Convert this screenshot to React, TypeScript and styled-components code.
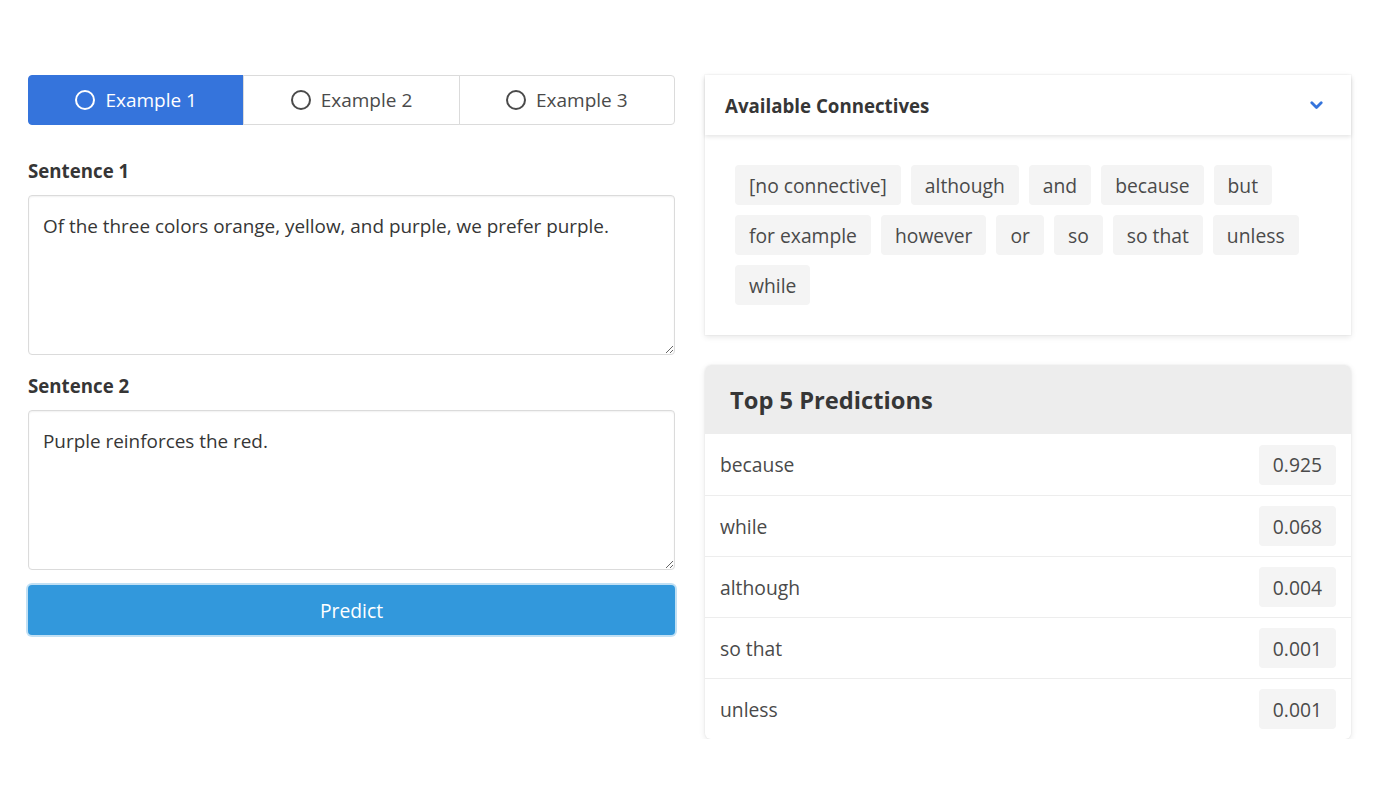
import React, { useState } from 'react'
import styled, { createGlobalStyle } from 'styled-components'

const $text = '#363636'
const $body = '#4a4a4a'
const $blue = '#3574dc'
const $predict = '#3298dc'
const $chip = '#f4f4f4'
const $border = '#dbdbdb'

const GlobalStyle = createGlobalStyle`
  html, body {
    margin: 0;
    padding: 0;
    background: #fff;
  }
  body {
    font-family: 'Open Sans', 'Noto Sans', sans-serif;
    color: ${$text};
  }
  * {
    box-sizing: border-box;
  }
`

const examples = [
  {
    s1: 'Of the three colors orange, yellow, and purple, we prefer purple.',
    s2: 'Purple reinforces the red.',
  },
  { s1: '', s2: '' },
  { s1: '', s2: '' },
]

const connectives = [
  '[no connective]',
  'although',
  'and',
  'because',
  'but',
  'for example',
  'however',
  'or',
  'so',
  'so that',
  'unless',
  'while',
]

const predictions = [
  { label: 'because', score: '0.925' },
  { label: 'while', score: '0.068' },
  { label: 'although', score: '0.004' },
  { label: 'so that', score: '0.001' },
  { label: 'unless', score: '0.001' },
]

export default function App() {
  const [active, setActive] = useState(0)
  const [open, setOpen] = useState(true)

  return (
    <>
      <GlobalStyle />
      <Page>
        <Column>
          <Tabs>
            {examples.map((_, i) => (
              <Tab key={i} active={active === i} onClick={() => setActive(i)}>
                <Radio active={active === i} />
                Example {i + 1}
              </Tab>
            ))}
          </Tabs>
          <Field>
            <Label>Sentence 1</Label>
            <TextArea defaultValue={examples[0].s1} key={`a${active}`} />
          </Field>
          <Field>
            <Label>Sentence 2</Label>
            <TextArea defaultValue={examples[0].s2} key={`b${active}`} />
          </Field>
          <PredictButton>Predict</PredictButton>
        </Column>

        <Column>
          <Card>
            <CardHeader onClick={() => setOpen(!open)}>
              <CardTitle>Available Connectives</CardTitle>
              <svg width="13" height="9" viewBox="0 0 13 9">
                <path
                  d="M1.8 1.8 L6.5 6.5 L11.2 1.8"
                  fill="none"
                  stroke={$blue}
                  strokeWidth="2.8"
                  strokeLinecap="round"
                  strokeLinejoin="round"
                />
              </svg>
            </CardHeader>
            {open && (
              <ChipList>
                {connectives.map(c => (
                  <Chip key={c}>{c}</Chip>
                ))}
              </ChipList>
            )}
          </Card>

          <Results>
            <ResultsHeader>Top 5 Predictions</ResultsHeader>
            {predictions.map(p => (
              <ResultRow key={p.label}>
                <span>{p.label}</span>
                <Score>{p.score}</Score>
              </ResultRow>
            ))}
          </Results>
        </Column>
      </Page>
    </>
  )
}

const Page = styled.div`
  display: grid;
  grid-template-columns: 647px 646px;
  column-gap: 30px;
  padding: 75px 0 0 28px;
  align-items: start;
`

const Column = styled.div`
  display: flex;
  flex-direction: column;
`

const Tabs = styled.div`
  display: flex;
  height: 50px;
`

const Tab = styled.div<{ active: boolean }>`
  flex: 1;
  display: flex;
  align-items: center;
  justify-content: center;
  gap: 10px;
  font-size: 19px;
  cursor: pointer;
  border: 1px solid ${p => (p.active ? $blue : $border)};
  background: ${p => (p.active ? $blue : '#fff')};
  color: ${p => (p.active ? '#fff' : $body)};
  & + & {
    margin-left: -1px;
  }
  &:first-child {
    border-radius: 4px 0 0 4px;
  }
  &:last-child {
    border-radius: 0 4px 4px 0;
  }
`

const Radio = styled.span<{ active: boolean }>`
  width: 20px;
  height: 20px;
  border-radius: 50%;
  border: 2px solid ${p => (p.active ? '#fff' : $body)};
`

const Field = styled.div`
  display: flex;
  flex-direction: column;
  margin-top: 33px;
  & + & {
    margin-top: 18px;
  }
`

const Label = styled.label`
  font-size: 18.7px;
  font-weight: 700;
  color: ${$text};
  margin-bottom: 11px;
  line-height: 26px;
`

const TextArea = styled.textarea`
  height: 160px;
  width: 100%;
  padding: 16px 14px;
  font-family: inherit;
  font-size: 18.9px;
  line-height: 28px;
  color: ${$text};
  border: 1px solid ${$border};
  border-radius: 4px;
  box-shadow: inset 0 1px 2px rgba(10, 10, 10, 0.06);
  resize: vertical;
  outline: none;
`

const PredictButton = styled.button`
  margin-top: 15px;
  height: 50px;
  width: 100%;
  border: none;
  border-radius: 4px;
  background: ${$predict};
  color: #fff;
  font-family: inherit;
  font-size: 19.3px;
  cursor: pointer;
  box-shadow: 0 0 0 2px rgba(50, 152, 220, 0.3);
`

const Card = styled.div`
  background: #fff;
  box-shadow: 0 2px 6px rgba(10, 10, 10, 0.1), 0 0 0 1px rgba(10, 10, 10, 0.02);
`

const CardHeader = styled.div`
  display: flex;
  align-items: center;
  justify-content: space-between;
  height: 60px;
  padding: 0 28px 0 20px;
  box-shadow: 0 2px 4px rgba(10, 10, 10, 0.1);
  cursor: pointer;
`

const CardTitle = styled.div`
  font-size: 18.7px;
  font-weight: 700;
  color: ${$text};
`

const ChipList = styled.div`
  display: flex;
  flex-wrap: wrap;
  gap: 10px;
  padding: 30px;
`

const Chip = styled.span`
  display: inline-flex;
  align-items: center;
  height: 40px;
  padding: 0 14px;
  background: ${$chip};
  border-radius: 4px;
  font-size: 19.3px;
  color: ${$body};
`

const Results = styled.div`
  margin-top: 30px;
  background: #fff;
  border-radius: 6px;
  overflow: hidden;
  box-shadow: 0 2px 6px rgba(10, 10, 10, 0.1), 0 0 0 1px rgba(10, 10, 10, 0.02);
`

const ResultsHeader = styled.div`
  height: 69px;
  display: flex;
  align-items: center;
  padding: 0 25px;
  background: #ededed;
  font-size: 23.7px;
  font-weight: 700;
  color: ${$text};
`

const ResultRow = styled.div`
  display: flex;
  align-items: center;
  justify-content: space-between;
  height: 61px;
  padding: 0 15px;
  font-size: 19.3px;
  color: ${$body};
  & + & {
    border-top: 1px solid #ededed;
  }
`

const Score = styled.span`
  display: inline-flex;
  align-items: center;
  justify-content: center;
  height: 40px;
  padding: 0 14px;
  background: ${$chip};
  border-radius: 4px;
`
